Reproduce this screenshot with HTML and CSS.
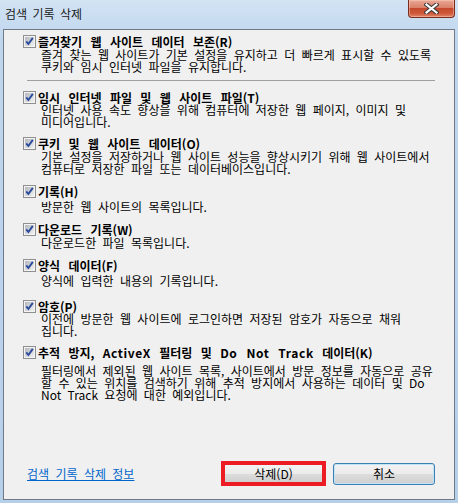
FILE: index.html
```html
<!DOCTYPE html>
<html lang="ko">
<head>
<meta charset="utf-8">
<title>검색 기록 삭제</title>
<link rel="stylesheet" href="styles.css">
</head>
<body>
<svg class="defs" width="0" height="0">
    <defs>
        <linearGradient id="chkfill" x1="0" y1="0" x2="1" y2="1">
            <stop offset="0" stop-color="#b3b7bd"/>
            <stop offset="1" stop-color="#f1f1f2"/>
        </linearGradient>
        <symbol id="chk" viewBox="0 0 13 13">
            <rect x="0.5" y="0.5" width="12" height="12" fill="#f4f4f4" stroke="#8e8f8f"/>
            <rect x="2" y="2" width="9" height="9" fill="url(#chkfill)"/>
            <path d="M3.3 6.4 L5.4 9 L9.8 2.9" fill="none" stroke="#2a4a9c" stroke-width="1.9"/>
        </symbol>
    </defs>
</svg>
<div class="window">
    <div class="titlebar">
        <span class="title">검색 기록 삭제</span>
        <span class="close">
            <svg width="15" height="11" viewBox="0 0 15 11">
                <path d="M2.5 1.5 L12.5 9.5 M12.5 1.5 L2.5 9.5" stroke="#3b3b3b" stroke-width="4.2" stroke-linecap="square"/>
                <path d="M2.5 1.5 L12.5 9.5 M12.5 1.5 L2.5 9.5" stroke="#fff" stroke-width="2.2" stroke-linecap="square"/>
            </svg>
        </span>
    </div>
    <div class="client">
        <div class="opts">
            <div class="opt">
                <div class="head"><svg class="box"><use href="#chk"/></svg><b>즐겨찾기 웹 사이트 데이터 보존(R)</b></div>
                <div class="desc">즐겨 찾는 웹 사이트가 기본 설정을 유지하고 더 빠르게 표시할 수 있도록<br>쿠키와 임시 인터넷 파일을 유지합니다.</div>
            </div>
            <div class="sep"></div>
            <div class="opt first">
                <div class="head"><svg class="box"><use href="#chk"/></svg><b>임시 인터넷 파일 및 웹 사이트 파일(T)</b></div>
                <div class="desc tight">인터넷 사용 속도 향상을 위해 컴퓨터에 저장한 웹 페이지, 이미지 및<br>미디어입니다.</div>
            </div>
            <div class="opt close-up">
                <div class="head"><svg class="box"><use href="#chk"/></svg><b>쿠키 및 웹 사이트 데이터(O)</b></div>
                <div class="desc">기본 설정을 저장하거나 웹 사이트 성능을 향상시키기 위해 웹 사이트에서<br>컴퓨터로 저장한 파일 또는 데이터베이스입니다.</div>
            </div>
            <div class="opt">
                <div class="head"><svg class="box"><use href="#chk"/></svg><b>기록(H)</b></div>
                <div class="desc loose">방문한 웹 사이트의 목록입니다.</div>
            </div>
            <div class="opt">
                <div class="head"><svg class="box"><use href="#chk"/></svg><b>다운로드 기록(W)</b></div>
                <div class="desc">다운로드한 파일 목록입니다.</div>
            </div>
            <div class="opt">
                <div class="head"><svg class="box"><use href="#chk"/></svg><b>양식 데이터(F)</b></div>
                <div class="desc loose">양식에 입력한 내용의 기록입니다.</div>
            </div>
            <div class="opt spaced">
                <div class="head"><svg class="box"><use href="#chk"/></svg><b>암호(P)</b></div>
                <div class="desc tight">이전에 방문한 웹 사이트에 로그인하면 저장된 암호가 자동으로 채워<br>집니다.</div>
            </div>
            <div class="opt close-up">
                <div class="head"><svg class="box"><use href="#chk"/></svg><b>추적 방지, <span class="en">ActiveX</span> 필터링 및 <span class="en">Do Not Track</span> 데이터(K)</b></div>
                <div class="desc wide">필터링에서 제외된 웹 사이트 목록, 사이트에서 방문 정보를 자동으로 공유<br>할 수 있는 위치를 검색하기 위해 추적 방지에서 사용하는 데이터 및 Do<br>Not Track 요청에 대한 예외입니다.</div>
            </div>
        </div>
        <div class="foot">
            <a class="link" href="#">검색 기록 삭제 정보</a>
            <span class="mark"><button class="btn plain">삭제(D)</button></span>
            <button class="btn focus">취소</button>
        </div>
    </div>
</div>
</body>
</html>
```

FILE: styles.css
```css
* { box-sizing: border-box; }

body {
    margin: 0px;
    padding: 0px;
    width: 458px;
    height: 503px;
    overflow: hidden;
    font-family: "Noto Sans CJK KR", "Noto Sans", sans-serif;
    font-size: 12px;
    color: #000;
}

.defs { position: absolute; }

.window {
    height: 503px;
    display: flex;
    flex-direction: column;
    background: linear-gradient(#d3e3f4, #bfd6ee 40px, #b7d0ea);
    padding: 0px 3px 3px 3px;
}

.titlebar {
    height: 29px;
    display: flex;
    align-items: flex-start;
}

.title {
    margin: 7px 0px 0px 2px;
    line-height: 13px;
    color: #1a1a1a;
    word-spacing: 2px;
}

.close {
    margin-left: auto;
    width: 47px;
    height: 18px;
    border: 1px solid #7a2c1e;
    border-top: none;
    border-radius: 0px 0px 4px 4px;
    background: linear-gradient(#e9a998, #d98068 45%, #c5482d 50%, #cf5a3c 80%, #e0876a);
    box-shadow: inset 0px 0px 0px 1px rgba(255, 210, 190, 0.45);
    display: flex;
    align-items: center;
    justify-content: center;
}

.close svg { display: block; }

.client {
    flex: 1;
    display: flex;
    flex-direction: column;
    background: #f0f0f0;
    border: 1px solid #6f7a86;
}

.opts { padding: 5px 0px 0px 19px; }

.opt { margin-top: 10px; }
.opt:first-child,
.opt.first { margin-top: 0px; }
.opt.close-up { margin-top: 9px; }
.opt.spaced { margin-top: 13px; }

.head {
    display: flex;
    align-items: center;
    height: 13px;
    line-height: 13px;
    word-spacing: 5px;
    white-space: nowrap;
}

.box {
    width: 13px;
    height: 13px;
    margin-right: 2px;
    flex: none;
}

.head b { font-weight: bold; }
.head .en { letter-spacing: 0.6px; }

.desc {
    margin: 1px 0px 0px 18px;
    line-height: 12px;
    white-space: nowrap;
    word-spacing: 3px;
}

.desc.tight { margin-top: 0px; }
.desc.loose { margin-top: 3px; }
.desc.wide { margin-top: 6px; }

.sep {
    margin: 7px 19px 10px 4px;
    height: 1px;
    background: #a0a0a0;
}

.foot {
    margin-top: auto;
    display: flex;
    align-items: center;
    padding: 0px 19px 13px 23px;
}

.link {
    color: #0066cc;
    text-decoration: underline;
    word-spacing: 3px;
}

.mark {
    margin-left: auto;
    margin-right: 7px;
    border: 4px solid #ed1c24;
    display: flex;
}

.btn {
    font-family: "Noto Sans CJK KR", "Noto Sans", sans-serif;
    font-size: 12px;
    color: #000;
    padding: 0px;
    line-height: 14px;
    background: linear-gradient(#f2f2f2, #ebebeb 50%, #dddddd 50%, #cfcfcf);
}

.btn.plain {
    width: 97px;
    height: 17px;
    border: none;
}

.btn.focus {
    width: 102px;
    height: 22px;
    border: 1px solid #3c7fb1;
    border-radius: 3px;
    box-shadow: inset 0px 0px 0px 1px #c0e4f8;
}
```
